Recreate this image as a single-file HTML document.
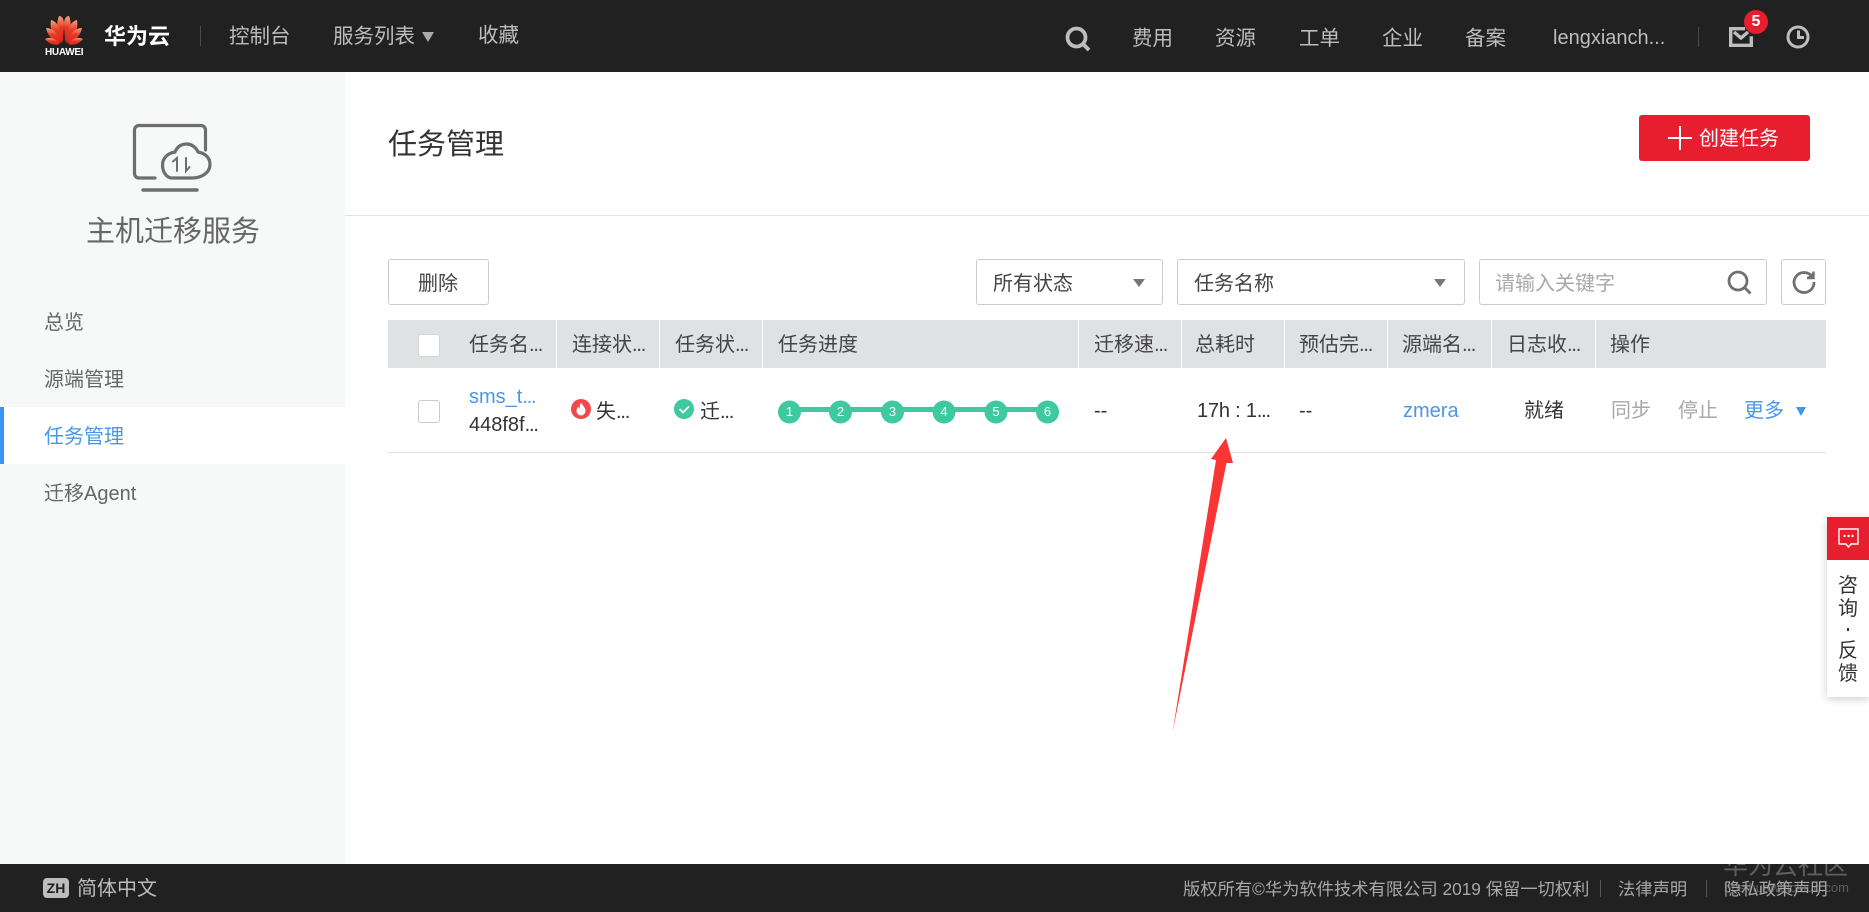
<!DOCTYPE html>
<html lang="zh"><head><meta charset="utf-8"><title>任务管理</title>
<style>
html,body{margin:0;padding:0;width:1869px;height:912px;overflow:hidden;background:#fff}
body{position:relative;font-family:"Liberation Sans","Noto Sans CJK SC",sans-serif;color:#333}
.a{position:absolute}
.t{position:absolute;white-space:nowrap;font-size:20px;line-height:24px}
.n{color:#bdbdbd}
.h{color:#444}
.e{letter-spacing:-1.2px}
.box{position:absolute;border:1px solid #c9cbce;border-radius:3px;box-sizing:border-box;background:#fff}
.hd{position:absolute;top:320px;width:1px;height:48px;background:#fff}
.tri{position:absolute;width:0;height:0;border-style:solid;border-color:#777 transparent transparent;border-width:8px 6px 0}
svg{position:absolute;overflow:visible}
</style></head><body>

<!-- top bar -->
<div class="a" style="left:0;top:0;width:1869px;height:72px;background:#212121"></div>
<svg style="left:45px;top:16px" width="38" height="39" viewBox="0 0 38 39">
<defs><linearGradient id="g" x1="0" y1="0" x2="0" y2="1"><stop offset="0" stop-color="#f4a27c"/><stop offset=".45" stop-color="#e83a25"/><stop offset="1" stop-color="#d8231c"/></linearGradient></defs>
<g fill="url(#g)">
<path d="M18 26C13 20 10 10 14 0c3 0 5 3 5 8 0 6-1 12-1 18z"/>
<path d="M20 26c5-6 8-16 4-26-3 0-5 3-5 8 0 6 1 12 1 18z"/>
<path d="M17 27C10 23 4 15 6 4c5 1 8 6 9 11 1 4 1 8 2 12z"/>
<path d="M21 27c7-4 13-12 11-23-5 1-8 6-9 11-1 4-1 8-2 12z"/>
<path d="M16 27C9 26 3 21 1 12c5 0 10 4 12 7 2 3 2 5 3 8z"/>
<path d="M22 27c7-1 13-6 15-15-5 0-10 4-12 7-2 3-2 5-3 8z"/>
<path d="M15 28c-5 2-11 0-15-5 4-2 8-1 11 1 2 1 3 3 4 4z"/>
<path d="M23 28c5 2 11 0 15-5-4-2-8-1-11 1-2 1-3 3-4 4z"/>
</g></svg>
<div class="t" style="left:45px;top:47px;width:38px;font-size:10px;line-height:11px;font-weight:bold;color:#fff;text-align:center;letter-spacing:-.3px">HUAWEI</div>
<div class="t" style="left:104px;top:25px;font-size:22px;font-weight:bold;color:#fff">华为云</div>
<div class="a" style="left:200px;top:26px;width:1px;height:20px;background:#4a4a4a"></div>
<div class="t n" style="left:229px;top:25px;font-size:20.5px">控制台</div>
<div class="t n" style="left:333px;top:25px;font-size:20.5px">服务列表</div>
<div class="tri" style="left:422px;top:32px;border-color:#aaa transparent transparent;border-width:10px 6px 0"></div>
<div class="t n" style="left:478px;top:24px;font-size:20.5px">收藏</div>

<svg style="left:1065px;top:26px" width="26" height="26" viewBox="0 0 26 26" fill="none" stroke="#bdbdbd" stroke-width="3.8"><circle cx="11.5" cy="11.5" r="9"/><path d="M18 18l6 6"/></svg>
<div class="t n" style="left:1132px;top:27px;font-size:20.5px">费用</div>
<div class="t n" style="left:1215px;top:27px;font-size:20.5px">资源</div>
<div class="t n" style="left:1299px;top:27px;font-size:20.5px">工单</div>
<div class="t n" style="left:1382px;top:27px;font-size:20.5px">企业</div>
<div class="t n" style="left:1465px;top:27px;font-size:20.5px">备案</div>
<div class="t n" style="left:1553px;top:26px;font-size:20px">lengxianch...</div>
<div class="a" style="left:1698px;top:27px;width:1px;height:20px;background:#4a4a4a"></div>
<svg style="left:1729px;top:27px" width="24" height="20" viewBox="0 0 24 20" fill="none" stroke="#bdbdbd" stroke-width="3.4"><path d="M16 1.700H1.700v16.600h20.600v-9"/><path d="M5 5l7 6 7-6"/></svg>
<div class="a" style="left:1744px;top:10px;width:24px;height:24px;border-radius:50%;background:#e61e2d;color:#fff;font-size:16px;line-height:24px;text-align:center;font-weight:bold">5</div>
<svg style="left:1786px;top:25px" width="24" height="24" viewBox="0 0 24 24" fill="none" stroke="#bdbdbd" stroke-width="3"><circle cx="12" cy="12" r="10"/><path d="M12.500 5.500v7H18"/></svg>

<!-- sidebar -->
<div class="a" style="left:0;top:72px;width:345px;height:792px;background:#f7f8f8"></div>
<svg style="left:130px;top:120px" width="86" height="76" viewBox="0 0 86 76" fill="none" stroke="#6e6e6e" stroke-width="3.2" stroke-linecap="round">
<path d="M25 58H9a4.500 4.500 0 0 1-4.500-4.500V10A4.500 4.500 0 0 1 9 5.500h62A4.500 4.500 0 0 1 75.500 10v20"/>
<path d="M13 70h54" stroke-width="3.400"/>
<path d="M42 58H62c8 0 18-4 18-14 0-7-6-11-12-12-2-5-7-8-11-8-6 0-10 3-12 8-7 1-12.500 6-12.500 13 0 8 5 13 9.500 13z"/>
<path d="M47 51V38l-4 3.500M56 38v13l3.500-4" stroke-width="2"/>
</svg>
<div class="t" style="left:86px;top:215px;font-size:29px;line-height:34px;color:#666">主机迁移服务</div>
<div class="t" style="left:44px;top:311px;color:#666">总览</div>
<div class="t" style="left:44px;top:368px;color:#666">源端管理</div>
<div class="a" style="left:0;top:407px;width:345px;height:57px;background:#fff"></div>
<div class="a" style="left:0;top:407px;width:4px;height:57px;background:#3a96f5"></div>
<div class="t" style="left:44px;top:425px;color:#4a97ea">任务管理</div>
<div class="t" style="left:44px;top:482px;color:#666">迁移Agent</div>

<!-- header -->
<div class="t" style="left:388px;top:128px;font-size:29px;line-height:34px;color:#333">任务管理</div>
<div class="a" style="left:1639px;top:115px;width:171px;height:46px;background:#e61e2d;border-radius:3px"></div>
<svg style="left:1668px;top:126px" width="24" height="24" viewBox="0 0 24 24" stroke="#fff" stroke-width="2"><path d="M12 0v24M0 12h24"/></svg>
<div class="t" style="left:1699px;top:127px;color:#fff">创建任务</div>
<div class="a" style="left:345px;top:215px;width:1524px;height:1px;background:#e3e4e6"></div>

<!-- toolbar -->
<div class="box" style="left:388px;top:259px;width:101px;height:46px"></div>
<div class="t" style="left:418px;top:272px;color:#444">删除</div>
<div class="box" style="left:976px;top:259px;width:187px;height:46px"></div>
<div class="t" style="left:993px;top:272px;color:#444">所有状态</div>
<div class="tri" style="left:1133px;top:279px"></div>
<div class="box" style="left:1177px;top:259px;width:288px;height:46px"></div>
<div class="t" style="left:1194px;top:272px;color:#444">任务名称</div>
<div class="tri" style="left:1434px;top:279px"></div>
<div class="box" style="left:1479px;top:259px;width:288px;height:46px"></div>
<div class="t" style="left:1495px;top:272px;color:#a8a8a8">请输入关键字</div>
<svg style="left:1727px;top:270px" width="25" height="25" viewBox="0 0 25 25" fill="none" stroke="#707070" stroke-width="2.800"><circle cx="11" cy="11" r="9"/><path d="M17.500 17.500l6 6"/></svg>
<div class="box" style="left:1781px;top:259px;width:45px;height:46px"></div>
<svg style="left:1792px;top:270px" width="24" height="24" viewBox="0 0 24 24" fill="none" stroke="#707070" stroke-width="2.800"><path d="M20 6.500A10 10 0 1 0 22 12"/><path d="M21.500 1.500v6.500h-6.500" stroke-width="2.400" fill="#707070"/></svg>

<!-- table header -->
<div class="a" style="left:388px;top:320px;width:1438px;height:48px;background:#dfe1e3"></div>
<div class="hd" style="left:556px"></div><div class="hd" style="left:659px"></div><div class="hd" style="left:762px"></div><div class="hd" style="left:1078px"></div><div class="hd" style="left:1181px"></div><div class="hd" style="left:1284px"></div><div class="hd" style="left:1387px"></div><div class="hd" style="left:1491px"></div><div class="hd" style="left:1595px"></div>
<div class="box" style="left:418px;top:334px;width:22px;height:23px;border-color:#d4d5d7"></div>
<div class="t h" style="left:469px;top:333px">任务名<span class="e">...</span></div>
<div class="t h" style="left:572px;top:333px">连接状<span class="e">...</span></div>
<div class="t h" style="left:675px;top:333px">任务状<span class="e">...</span></div>
<div class="t h" style="left:778px;top:333px">任务进度</div>
<div class="t h" style="left:1094px;top:333px">迁移速<span class="e">...</span></div>
<div class="t h" style="left:1195px;top:333px">总耗时</div>
<div class="t h" style="left:1299px;top:333px">预估完<span class="e">...</span></div>
<div class="t h" style="left:1402px;top:333px">源端名<span class="e">...</span></div>
<div class="t h" style="left:1507px;top:333px">日志收<span class="e">...</span></div>
<div class="t h" style="left:1610px;top:333px">操作</div>

<!-- row -->
<div class="box" style="left:418px;top:400px;width:22px;height:23px;border-color:#c9cbce"></div>
<div class="t" style="left:469px;top:385px;color:#4a97ea">sms_t<span class="e">...</span></div>
<div class="t" style="left:469px;top:413px">448f8f<span class="e">...</span></div>
<svg style="left:571px;top:399px" width="20" height="20" viewBox="0 0 20 20"><circle cx="10" cy="10" r="10" fill="#f2474c"/><path d="M10.500 3.500c.5 3 4 4.500 4 8.500a4.500 4.500 0 0 1-9 0c0-2 1-3.500 2-4.500 0 1.500.5 2 1.200 2.300C8.500 7.500 9 5 10.500 3.500z" fill="#fff"/></svg>
<div class="t" style="left:596px;top:400px">失<span class="e">...</span></div>
<svg style="left:674px;top:399px" width="20" height="20" viewBox="0 0 20 20"><circle cx="10" cy="10" r="10" fill="#3ec9a0"/><path d="M5.500 10l3.500 3.500 6-6" fill="none" stroke="#fff" stroke-width="1.800"/></svg>
<div class="t" style="left:700px;top:400px">迁<span class="e">...</span></div>
<svg style="left:778px;top:400px" width="282" height="24" viewBox="0 0 282 24">
<rect x="11" y="7" width="260" height="5" fill="#3ec9a0"/>
<g fill="#3ec9a0"><circle cx="11.500" cy="12" r="11.500"/><circle cx="62.500" cy="12" r="11.500"/><circle cx="114.500" cy="12" r="11.500"/><circle cx="166" cy="12" r="11.500"/><circle cx="218" cy="12" r="11.500"/><circle cx="269.500" cy="12" r="11.500"/></g>
<g fill="#fff" font-family="Liberation Sans" font-size="13" text-anchor="middle"><text x="11.500" y="16">1</text><text x="62.500" y="16">2</text><text x="114.500" y="16">3</text><text x="166" y="16">4</text><text x="218" y="16">5</text><text x="269.500" y="16">6</text></g>
</svg>
<div class="t" style="left:1094px;top:399px">--</div>
<div class="t" style="left:1197px;top:399px;letter-spacing:-.2px">17h : 1<span class="e">...</span></div>
<div class="t" style="left:1299px;top:399px">--</div>
<div class="t" style="left:1403px;top:399px;color:#4a97ea">zmera</div>
<div class="t" style="left:1524px;top:399px">就绪</div>
<div class="t" style="left:1611px;top:399px;color:#a8a8a8">同步</div>
<div class="t" style="left:1678px;top:399px;color:#a8a8a8">停止</div>
<div class="t" style="left:1744px;top:399px;color:#4a97ea">更多</div>
<div class="tri" style="left:1796px;top:407px;border-color:#3a96f5 transparent transparent;border-width:9px 5px 0"></div>
<div class="a" style="left:388px;top:452px;width:1438px;height:1px;background:#dfe1e3"></div>

<!-- annotation arrow -->
<svg style="left:0;top:0" width="1869" height="912"><path d="M1226 438L1211 459 1216 460 1172.600 732 1226.500 463 1233 463z" fill="#f93535"/></svg>

<!-- float panel -->
<div class="a" style="left:1827px;top:517px;width:42px;height:180px;background:#fff;box-shadow:0 2px 8px rgba(0,0,0,.2)"></div>
<div class="a" style="left:1827px;top:517px;width:42px;height:43px;background:#e61e2d"></div>
<svg style="left:1838px;top:528px" width="21" height="20" viewBox="0 0 21 20" fill="none" stroke="#fff" stroke-width="1.400"><path d="M1 1h19v15h-7l-2.500 3L8 16H1z"/><circle cx="6.500" cy="8" r="1.200" fill="#fff" stroke="none"/><circle cx="10.500" cy="8" r="1.200" fill="#fff" stroke="none"/><circle cx="14.500" cy="8" r="1.200" fill="#fff" stroke="none"/></svg>
<div class="t" style="left:1838px;top:574px;width:20px;text-align:center">咨</div>
<div class="t" style="left:1838px;top:597px;width:20px;text-align:center">询</div>
<div class="a" style="left:1847px;top:628px;width:2px;height:3px;background:#333"></div>
<div class="t" style="left:1838px;top:639px;width:20px;text-align:center">反</div>
<div class="t" style="left:1838px;top:662px;width:20px;text-align:center">馈</div>

<!-- footer -->
<div class="a" style="left:0;top:864px;width:1869px;height:48px;background:#212121;overflow:hidden">
<div class="t" style="left:1723px;top:-13px;font-size:25px;line-height:30px;color:#5f5f5f">华为云社区</div>
<div class="t" style="right:20px;top:15px;font-size:13px;line-height:18px;color:#5f5f5f">bbs.huaweicloud.com</div>
</div>
<div class="a" style="left:43px;top:878px;width:26px;height:20px;background:#bdbdbd;border-radius:4px;color:#212121;font-size:14px;line-height:20px;font-weight:bold;text-align:center">ZH</div>
<div class="t" style="left:77px;top:877px;color:#bdbdbd">简体中文</div>
<div class="t" style="left:1183px;top:877px;font-size:17.300px;color:#a8a8a8">版权所有©华为软件技术有限公司 2019 保留一切权利</div>
<div class="a" style="left:1600px;top:880px;width:1px;height:17px;background:#555"></div>
<div class="t" style="left:1618px;top:877px;font-size:17.300px;color:#a8a8a8">法律声明</div>
<div class="a" style="left:1706px;top:880px;width:1px;height:17px;background:#555"></div>
<div class="t" style="left:1724px;top:877px;font-size:17.300px;color:#a8a8a8">隐私政策声明</div>
</body></html>
